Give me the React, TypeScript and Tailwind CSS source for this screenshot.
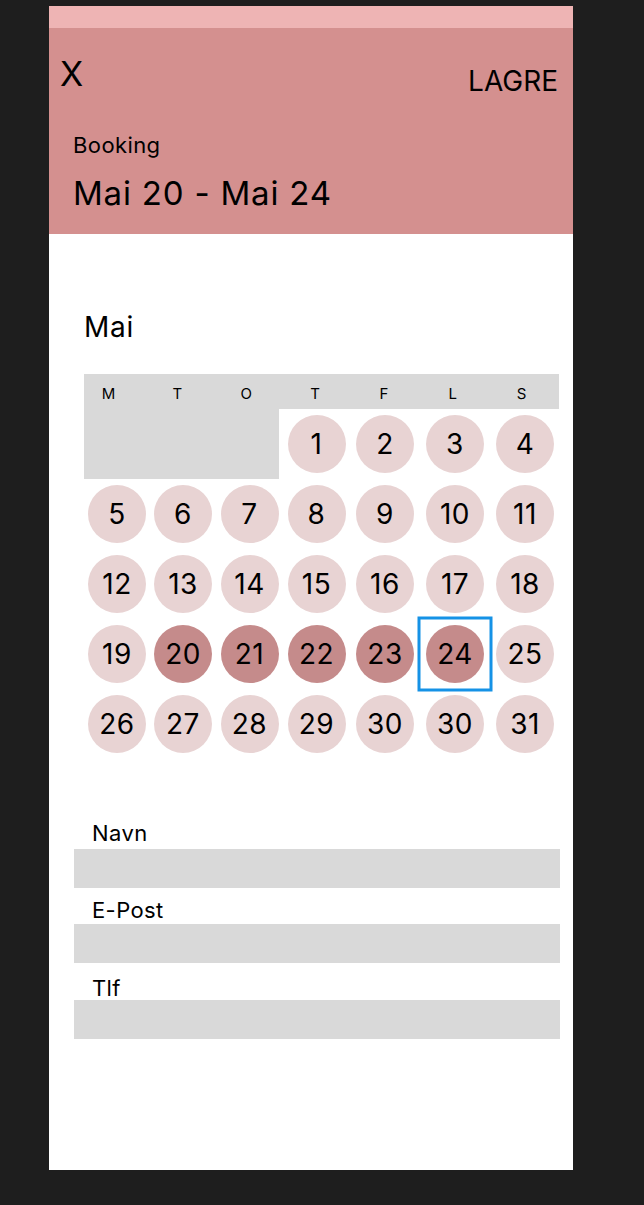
import React from 'react';

const weekdays = ['M', 'T', 'O', 'T', 'F', 'L', 'S'];

// rows of the month grid; null = empty leading cells
const rows: (number | null)[][] = [
  [null, null, null, 1, 2, 3, 4],
  [5, 6, 7, 8, 9, 10, 11],
  [12, 13, 14, 15, 16, 17, 18],
  [19, 20, 21, 22, 23, 24, 25],
  [26, 27, 28, 29, 30, 30, 31],
];

const selected = [20, 21, 22, 23, 24];

const DayCell: React.FC<{ day: number; focused?: boolean }> = ({ day, focused }) => {
  const active = selected.includes(day);
  return (
    <div className="relative flex h-[70px] items-center justify-center">
      <div
        className={`flex h-[58px] w-[58px] items-center justify-center rounded-full text-[28px] leading-none tracking-[0.5px] text-black ${
          active ? 'bg-[#c58b8b]' : 'bg-[#e8d3d3]'
        }`}
      >
        {day}
      </div>
      {focused && (
        <div className="pointer-events-none absolute left-1/2 top-1/2 h-[75px] w-[75px] -translate-x-1/2 -translate-y-1/2 border-[3px] border-[#1592e6]" />
      )}
    </div>
  );
};

const Field: React.FC<{ label: string; className?: string; gap: string }> = ({ label, className, gap }) => (
  <div className={className}>
    <div className={`pl-[18px] text-[22px] leading-[26px] tracking-[0.4px] text-black ${gap}`}>{label}</div>
    <div className="h-[39px] w-[486px] bg-[#d9d9d9]" />
  </div>
);

export default function App() {
  return (
    <div
      className="min-h-screen bg-[#1e1e1e] pt-[6px] pb-[35px]"
      style={{ fontFamily: 'Inter, "Noto Sans", sans-serif' }}
    >
      <div className="mx-[49px] flex h-[1164px] w-[524px] flex-col bg-white">
        <div className="h-[22px] bg-[#eeb4b4]" />

        <header className="bg-[#d4908f] pb-[22px] pt-[26px]">
          <div className="flex items-start justify-between pl-[11px] pr-[15px]">
            <button className="text-[34px] leading-[40px] text-black">X</button>
            <button className="mt-[10px] text-[28px] leading-[34px] text-black">LAGRE</button>
          </div>
          <div className="mt-[34px] pl-[24px]">
            <p className="text-[22px] leading-[26px] tracking-[0.4px] text-black">Booking</p>
            <h1 className="mt-[16px] text-[33px] leading-[38px] tracking-[0.8px] text-black">Mai 20 - Mai 24</h1>
          </div>
        </header>

        <section className="ml-[35px] mt-[76px] w-[476px]">
          <h2 className="text-[28px] leading-[34px] tracking-[0.8px] text-black">Mai</h2>

          <div className="mt-[30px] h-[35px] w-[475px] overflow-hidden bg-[#d9d9d9] pt-[10px]">
            <div className="-ml-[10px] grid w-[482px] grid-cols-7">
              {weekdays.map((d, i) => (
                <span key={i} className="text-center text-[15px] leading-[20px] text-black">
                  {d}
                </span>
              ))}
            </div>
          </div>

          <div className="grid grid-cols-[66px_66px_67px_67px_70px_70px_70px]">
            {rows.map((row, r) =>
              r === 0
                ? [
                    <div key="blank" className="col-span-3 mr-[4px] h-[70px] bg-[#d9d9d9]" />,
                    ...row
                      .filter((d): d is number => d !== null)
                      .map((d) => <DayCell key={`${r}-${d}`} day={d} />),
                  ]
                : row.map((d, c) => <DayCell key={`${r}-${c}`} day={d as number} focused={d === 24} />)
            )}
          </div>
        </section>

        <section className="ml-[25px] mt-[61px]">
          <Field label="Navn" gap="mb-[3px]" />
          <Field label="E-Post" gap="mb-[1px]" className="mt-[9px]" />
          <Field label="Tlf" gap="-mb-[1px]" className="mt-[12px]" />
        </section>
      </div>
    </div>
  );
}
